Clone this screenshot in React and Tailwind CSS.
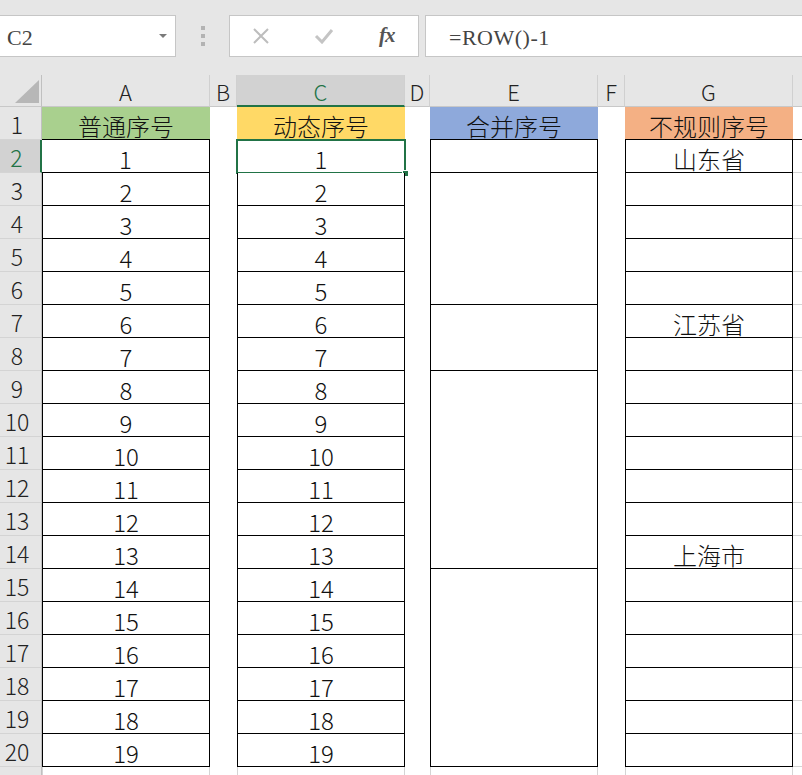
import React from "react";

const ROWS = 20;
const cjk = "font-['Noto_Sans_CJK_SC',sans-serif]";

// merged ranges in column E (start row -> span)
const E_MERGES = { 2: 1, 3: 4, 7: 2, 9: 6, 15: 6 };
const SPAN = { 1: "", 2: "row-span-2", 4: "row-span-4", 6: "row-span-6" };
const PLACES = { 2: "山东省", 7: "江苏省", 14: "上海市" };

function ColHead({ label, selected, last }) {
  return (
    <div
      className={
        "flex items-center justify-center text-[22px] font-light border-b " +
        (last ? "" : "border-r border-r-[#d0d0d0] ") +
        (selected
          ? "bg-[#d2d2d2] text-[#217346] border-b-2 border-b-[#217346]"
          : "bg-[#e6e6e6] text-[#222] border-b-[#c8c8c8]")
      }
    >
      <span className="pt-[2px]">{label}</span>
    </div>
  );
}

function RowHead({ n }) {
  const sel = n === 2;
  return (
    <div
      className={
        "flex items-center justify-center pr-[7px] text-[23px] font-light border-b border-b-[#d4d4d4] " +
        (sel
          ? "bg-[#d2d2d2] text-[#217346] border-r-2 border-r-[#217346]"
          : "bg-[#e6e6e6] text-[#222] border-r border-r-[#c0c0c0]")
      }
    >
      <span className="pt-[3px]">{n}</span>
    </div>
  );
}

function Cell({ children, fill, head, className = "" }) {
  return (
    <div
      className={
        "flex items-center justify-center text-[24px] font-light text-[#111] " +
        (head ? fill + " border-b border-b-black " : "bg-white border-x border-b border-black ") +
        className
      }
    >
      <span className="pt-[5px]">{children}</span>
    </div>
  );
}

function Gap() {
  return <div className="bg-white" />;
}

function Rest({ head }) {
  return <div className={"bg-white border-b " + (head ? "border-b-black" : "border-b-[#d4d4d4]")} />;
}

export default function App() {
  const cells = [];
  cells.push(
    <div key="corner" className="bg-[#e6e6e6] border-r border-r-[#c0c0c0] border-b border-b-[#c8c8c8] relative">
      <svg className="absolute left-[15px] top-[5px]" width="24" height="23" viewBox="0 0 24 23">
        <polygon points="24,0 24,23 0,23" fill="#b7b7b7" />
      </svg>
    </div>
  );
  ["A", "B", "C", "D", "E", "F", "G", ""].forEach((c, i) =>
    cells.push(<ColHead key={"h" + i} label={c} selected={c === "C"} last={i === 7} />)
  );

  for (let r = 1; r <= ROWS; r++) {
    const head = r === 1;
    cells.push(<RowHead key={"r" + r} n={r} />);
    cells.push(
      <Cell key={"a" + r} head={head} fill="bg-[#a9d08e]" className={r === 2 ? "border-l-0" : ""}>
        {head ? "普通序号" : r - 1}
      </Cell>
    );
    cells.push(<Gap key={"b" + r} />);
    cells.push(
      <div key={"c" + r} className="relative flex">
        <Cell head={head} fill="bg-[#ffd966]" className="flex-1">
          {head ? "动态序号" : r - 1}
        </Cell>
        {r === 2 && (
          <div className="absolute left-[-1px] top-[-1px] right-[-1px] bottom-[-1px] border-2 border-[#217346]">
            <div className="absolute right-[-5px] bottom-[-5px] w-[7px] h-[7px] bg-[#217346] border border-white" />
          </div>
        )}
      </div>
    );
    cells.push(<Gap key={"d" + r} />);
    if (head) {
      cells.push(
        <Cell key="e1" head fill="bg-[#8ea9db]">
          合并序号
        </Cell>
      );
    } else if (E_MERGES[r]) {
      cells.push(<Cell key={"e" + r} className={SPAN[E_MERGES[r]]} />);
    }
    cells.push(<Gap key={"f" + r} />);
    cells.push(
      <Cell key={"g" + r} head={head} fill="bg-[#f4b084]">
        {head ? "不规则序号" : PLACES[r] || ""}
      </Cell>
    );
    cells.push(<Rest key={"x" + r} head={head} />);
  }

  // partially visible row 21
  cells.push(<div key="r21" className="bg-[#e6e6e6] border-r border-r-[#c0c0c0]" />);
  ["a", "b", "c", "d", "e", "f", "g", "x"].forEach((k, i) =>
    cells.push(
      <div
        key={"z" + k}
        className={"bg-white " + (i % 2 === 0 && i < 7 ? "border-x border-[#d4d4d4]" : "")}
      />
    )
  );

  return (
    <div className={"w-[802px] h-[775px] overflow-hidden bg-white " + cjk}>
      {/* formula bar */}
      <div className="h-[75px] bg-[#e6e6e6] flex items-start pt-[15px]">
        <div className="w-[176px] h-[42px] bg-white border border-[#c6c6c6] border-l-0 flex items-center pl-[7px] relative">
          <span className="font-['Liberation_Serif',serif] text-[22px] text-[#444] pt-[2px]">C2</span>
          <svg className="absolute left-[159px] top-[18px]" width="8" height="5" viewBox="0 0 8 5">
            <polygon points="0,0 8,0 4,4" fill="#7a7a7a" />
          </svg>
        </div>
        <div className="w-[53px] h-[42px] flex flex-col items-center justify-center gap-[4px]">
          <div className="w-[4px] h-[4px] bg-[#b3b3b3]" />
          <div className="w-[4px] h-[4px] bg-[#b3b3b3]" />
          <div className="w-[4px] h-[4px] bg-[#b3b3b3]" />
        </div>
        <div className="w-[190px] h-[42px] bg-white border border-[#c6c6c6] flex items-center">
          <div className="w-[63px] flex justify-center">
            <svg width="18" height="18" viewBox="0 0 18 18">
              <path d="M2 2 L16 16 M16 2 L2 16" stroke="#bdbdbd" strokeWidth="2" />
            </svg>
          </div>
          <div className="w-[63px] flex justify-center">
            <svg width="20" height="16" viewBox="0 0 20 16">
              <path d="M2 8 L8 14 L18 2" stroke="#c4c4c4" strokeWidth="3" fill="none" />
            </svg>
          </div>
          <div className="w-[63px] flex justify-center">
            <span className="font-['Liberation_Serif',serif] italic font-bold text-[21px] text-[#555] tracking-[-1px]">
              fx
            </span>
          </div>
        </div>
        <div className="ml-[6px] flex-1 h-[42px] bg-white border border-r-0 border-[#c6c6c6] flex items-center pl-[23px]">
          <span className="font-['Liberation_Serif',serif] text-[22px] text-[#444] tracking-[0.5px] pt-[2px]">
            =ROW()-1
          </span>
        </div>
      </div>

      {/* sheet */}
      <div className="grid grid-cols-[42px_168px_27px_168px_25px_168px_27px_168px_1fr] grid-rows-[32px_repeat(21,33px)]">
        {cells}
      </div>
    </div>
  );
}
